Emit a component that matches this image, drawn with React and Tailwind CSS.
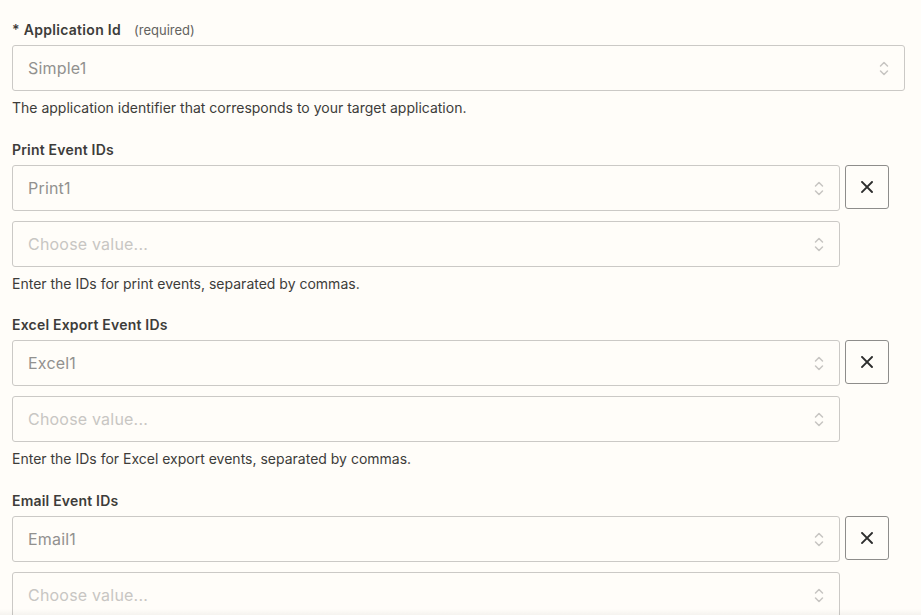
const font = { fontFamily: "Inter, 'Noto Sans', sans-serif" };

function Chevrons() {
    return (
        <svg width="10" height="17" viewBox="0 0 10 17" fill="none" className="shrink-0">
            <path d="M1.5 6 L5 2.5 L8.5 6" stroke="#c7c5c2" strokeWidth="1.5" strokeLinecap="round" strokeLinejoin="round" />
            <path d="M1.5 11 L5 14.5 L8.5 11" stroke="#c7c5c2" strokeWidth="1.5" strokeLinecap="round" strokeLinejoin="round" />
        </svg>
    );
}

function SelectBox({ value, placeholder, width }) {
    return (
        <div
            className={`${width} h-[46px] flex items-center justify-between pl-[15px] pr-[15px] border border-[#cbc9c6] rounded-[3px] bg-[#fffdf9]`}
        >
            {value ? (
                <span className="text-[16px] tracking-[0.2px] text-[#92918f]">{value}</span>
            ) : (
                <span className="text-[16px] tracking-[0.2px] text-[#c8c6c3]">{placeholder}</span>
            )}
            <Chevrons />
        </div>
    );
}

function RemoveButton() {
    return (
        <button className="w-[44px] h-[44px] flex items-center justify-center border border-[#8e8d8b] rounded-[3px] bg-[#fffdf9]">
            <svg width="12" height="12" viewBox="0 0 12 12" fill="none">
                <path d="M1 1 L11 11 M11 1 L1 11" stroke="#2d2d2d" strokeWidth="1.9" strokeLinecap="square" />
            </svg>
        </button>
    );
}

function ListField({ label, value, help, height = "h-[175px]" }) {
    return (
        <div className={height}>
            <div className="h-5 text-[14px] leading-5 font-semibold tracking-[0.2px] text-[#3d3c3a] mb-[5px]">{label}</div>
            <div className="flex items-start gap-[5px]">
                <SelectBox value={value} width="w-[828px]" />
                <RemoveButton />
            </div>
            <div className="mt-[10px]">
                <SelectBox placeholder="Choose value..." width="w-[828px]" />
            </div>
            <div className="mt-[7px] h-5 text-[14px] leading-5 text-[#3d3c3a]">{help}</div>
        </div>
    );
}

export default function App() {
    return (
        <div className="relative w-[921px] h-[615px] overflow-hidden bg-[#fffdf9]" style={font}>
            <div className="pt-[20px] pl-[12px] flex flex-col">
                <div className="h-[120px]">
                    <div className="h-5 flex items-baseline leading-5 text-[#3d3c3a] mb-[5px]">
                        <span className="text-[14px] font-semibold tracking-[0.3px]">* Application Id</span>
                        <span className="ml-[13px] text-[13px] text-[#63625f]">(required)</span>
                    </div>
                    <SelectBox value="Simple1" width="w-[893px]" />
                    <div className="mt-[7px] h-5 text-[14px] leading-5 text-[#3d3c3a]">
                        The application identifier that corresponds to your target application.
                    </div>
                </div>

                <ListField
                    label="Print Event IDs"
                    value="Print1"
                    help="Enter the IDs for print events, separated by commas."
                />
                <ListField
                    label="Excel Export Event IDs"
                    value="Excel1"
                    help="Enter the IDs for Excel export events, separated by commas."
                    height="h-[176px]"
                />
                <ListField label="Email Event IDs" value="Email1" help="" />
            </div>
            <div className="absolute left-0 right-0 bottom-0 h-[6px] bg-gradient-to-b from-transparent to-black/[0.04]" />
        </div>
    );
}
